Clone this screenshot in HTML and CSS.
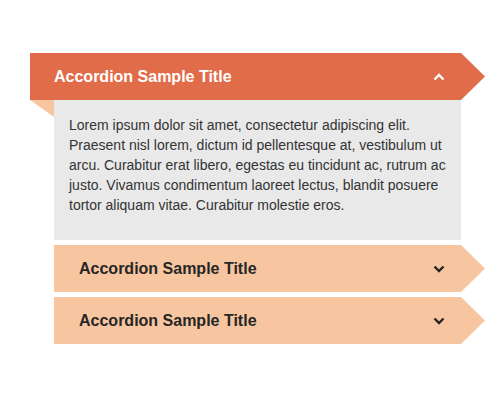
FILE: index.html
```html
<!DOCTYPE html>
<html>
<head>
<meta charset="utf-8">
<link rel="stylesheet" href="styles.css">
</head>
<body>
<div class="accordion">
  <div class="item open">
    <div class="head">
      <span class="title">Accordion Sample Title</span>
      <svg class="chev" width="12" height="8" viewBox="0 0 12 8"><path d="M1.5 6.5 L6 2 L10.5 6.5" fill="none" stroke="currentColor" stroke-width="2.4"/></svg>
    </div>
    <div class="panel">
      <p>Lorem ipsum dolor sit amet, consectetur adipiscing elit. Praesent nisl lorem, dictum id pellentesque at, vestibulum ut arcu. Curabitur erat libero, egestas eu tincidunt ac, rutrum ac justo. Vivamus condimentum laoreet lectus, blandit posuere tortor aliquam vitae. Curabitur molestie eros.</p>
    </div>
  </div>
  <div class="item">
    <div class="head">
      <span class="title">Accordion Sample Title</span>
      <svg class="chev" width="12" height="8" viewBox="0 0 12 8"><path d="M1.5 1.5 L6 6 L10.5 1.5" fill="none" stroke="currentColor" stroke-width="2.4"/></svg>
    </div>
  </div>
  <div class="item">
    <div class="head">
      <span class="title">Accordion Sample Title</span>
      <svg class="chev" width="12" height="8" viewBox="0 0 12 8"><path d="M1.5 1.5 L6 6 L10.5 1.5" fill="none" stroke="currentColor" stroke-width="2.4"/></svg>
    </div>
  </div>
</div>
</body>
</html>
```
FILE: styles.css
```css
html, body {
  margin: 0;
  background: #ffffff;
  font-family: "Liberation Sans", Arial, sans-serif;
}
.accordion {
  padding: 53px 0 0 30px;
  width: 455px;
  display: flex;
  flex-direction: column;
  gap: 5px;
}
.item {
  position: relative;
}
.head {
  height: 47px;
  margin-left: 24px;
  padding: 0 40px 0 25px;
  display: flex;
  align-items: center;
  justify-content: space-between;
  background: #f7c59f;
  color: #262626;
  clip-path: polygon(0 0, calc(100% - 24px) 0, 100% 50%, calc(100% - 24px) 100%, 0 100%);
}
.title {
  font-size: 16px;
  font-weight: bold;
}
.chev {
  display: block;
}
.open .head {
  margin-left: 0;
  padding-left: 24px;
  background: #e16c49;
  color: #ffffff;
}
.panel {
  margin-left: 24px;
  width: 407px;
  box-sizing: border-box;
  background: #e9e9e9;
  padding: 15px 15px 25px 15px;
}
.panel p {
  margin: 0;
  font-size: 14px;
  line-height: 20px;
  color: #333333;
}
.open::before {
  content: "";
  position: absolute;
  left: 0;
  top: 47px;
  width: 24px;
  height: 17px;
  background: #f7c59f;
  clip-path: polygon(0 0, 100% 0, 100% 100%);
}
```
